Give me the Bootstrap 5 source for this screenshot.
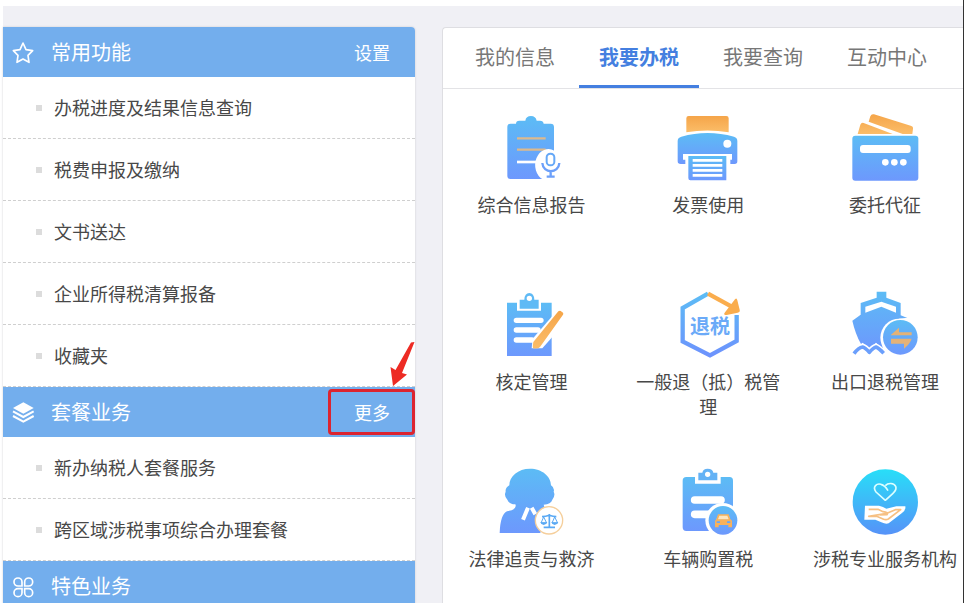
<!DOCTYPE html>
<html lang="zh-CN">
<head>
<meta charset="utf-8">
<meta name="viewport" content="width=device-width, initial-scale=1">
<title>我要办税</title>
<link href="https://cdn.jsdelivr.net/npm/bootstrap@5.3.0/dist/css/bootstrap.min.css" rel="stylesheet">
<style>
body{font-family:"Noto Sans CJK SC",sans-serif;font-size:18px;line-height:25px;color:#484848;background:#fff}
.page-frame{padding:6px 0 0 3px;border-right:1px solid #333}
.page-grid{display:grid;grid-template-columns:minmax(0,412fr) minmax(0,521fr);gap:27px;background:#f0f0f5;padding-top:21px}
.side-panel{background:#fff;border-radius:0 4px 0 0;box-shadow:0 0 2px #c4c4ca}
.side-head{background:#73aeed;color:#fff;height:50px;padding:0 25px 0 8px;gap:16px}
.side-head h2{font-size:20px;line-height:28px;font-weight:400}
.side-head svg{width:24px;height:24px}
.side-head button{color:#fff;font-size:18px;line-height:25px}
.side-panel section:first-child .side-head{border-radius:0 4px 0 0}
.side-item{height:62px;padding-left:33px;gap:12px;border-bottom:1px dashed #cfcfcf;color:#484848}
.side-item::before{content:"";width:6px;height:6px;background:#dcdcdc}
.callout-box{right:0;top:2px;width:87px;height:46px;border:3px solid #dc2430;border-radius:4px;pointer-events:none}
.callout-arrow{right:0;bottom:49px;width:26px!important;height:48px!important;pointer-events:none}
.main-panel{background:#fff;border:1px solid #dedee2;border-right:0;border-radius:4px 0 0 0}
.tab-bar{height:61px;padding-left:12px;gap:4px;border-bottom:1px solid #e3e3e6}
.tab-link{width:120px;color:#777;font-size:20px;line-height:28px;border-bottom:3px solid transparent}
.tab-link.active{color:#447fe0;font-weight:700;border-color:#447fe0}
.service-grid{display:grid;grid-template-columns:repeat(3,34%);grid-auto-rows:177px;overflow:hidden}
.service{padding:23px 14px 0;gap:8px;color:#484848}
.service svg{width:72px;height:72px;flex:none}
</style>
<script src="https://cdn.jsdelivr.net/npm/bootstrap@5.3.0/dist/js/bootstrap.bundle.min.js"></script>
</head>
<body>
<svg width="0" height="0" class="position-absolute" aria-hidden="true">
<defs>
<linearGradient id="blue" x1="0" y1="0" x2="0" y2="1"><stop offset="0" stop-color="#5cbcf5"/><stop offset="1" stop-color="#6d98fd"/></linearGradient>
<linearGradient id="cyan" x1="0" y1="0" x2="0" y2="1"><stop offset="0" stop-color="#28def8"/><stop offset="1" stop-color="#5692f8"/></linearGradient>
<linearGradient id="gold" x1="0" y1="0" x2="0" y2="1"><stop offset="0" stop-color="#f5a549"/><stop offset="1" stop-color="#fbbd69"/></linearGradient>
</defs>
</svg>
<div class="page-frame vh-100 overflow-hidden">
<div class="page-grid h-100">
<aside class="side-panel">
<section>
<div class="side-head d-flex align-items-center">
<svg viewBox="33 120 72 72" fill="none" stroke="#fff" stroke-width="5" stroke-linejoin="round" aria-hidden="true"><path d="M69 129L78 149L98 152L84 166L87 187L69 177L51 187L54 166L40 152L60 149Z"/></svg>
<h2 class="m-0 flex-grow-1">常用功能</h2>
<button type="button" class="btn p-0 border-0">设置</button>
</div>
<nav>
<a href="#" class="side-item d-flex align-items-center text-decoration-none">办税进度及结果信息查询</a>
<a href="#" class="side-item d-flex align-items-center text-decoration-none">税费申报及缴纳</a>
<a href="#" class="side-item d-flex align-items-center text-decoration-none">文书送达</a>
<a href="#" class="side-item d-flex align-items-center text-decoration-none">企业所得税清算报备</a>
<a href="#" class="side-item d-flex align-items-center text-decoration-none">收藏夹</a>
</nav>
</section>
<section>
<div class="side-head d-flex align-items-center position-relative">
<svg viewBox="33 60 72 72" fill="#fff" aria-hidden="true"><path d="M70 67L101 84L70 101L39 84Z"/><path d="M39 94L70 111L101 94M39 108L70 125L101 108" fill="none" stroke="#fff" stroke-width="6"/></svg>
<h2 class="m-0 flex-grow-1">套餐业务</h2>
<button type="button" class="btn p-0 border-0">更多</button>
<span class="callout-box position-absolute"></span>
<svg class="callout-arrow position-absolute" viewBox="390 340 26 48" fill="#ed2b24" aria-hidden="true"><path d="M394 386L391.500 367L396.500 370L412 342.500L415.500 342L403 373L408 374.500Z"/></svg>
</div>
<nav>
<a href="#" class="side-item d-flex align-items-center text-decoration-none">新办纳税人套餐服务</a>
<a href="#" class="side-item d-flex align-items-center text-decoration-none">跨区域涉税事项综合办理套餐</a>
</nav>
</section>
<section>
<div class="side-head d-flex align-items-center">
<svg viewBox="33 582 72 72" fill="none" stroke="#fff" stroke-width="5" aria-hidden="true"><path d="M66 618H54A12 12 0 1 1 66 606ZM74 618V606A12 12 0 1 1 86 618ZM66 626V638A12 12 0 1 1 54 626ZM74 626H86A12 12 0 1 1 74 638Z"/></svg>
<h2 class="m-0 flex-grow-1">特色业务</h2>
</div>
</section>
</aside>
<main class="main-panel">
<nav class="tab-bar d-flex">
<a href="#" class="tab-link d-flex align-items-center justify-content-center text-decoration-none">我的信息</a>
<a href="#" class="tab-link active d-flex align-items-center justify-content-center text-decoration-none" aria-current="page">我要办税</a>
<a href="#" class="tab-link d-flex align-items-center justify-content-center text-decoration-none">我要查询</a>
<a href="#" class="tab-link d-flex align-items-center justify-content-center text-decoration-none">互动中心</a>
</nav>
<div class="service-grid">
<a href="#" class="service d-flex flex-column align-items-center text-center text-decoration-none">
<svg viewBox="45 36 216 216" aria-hidden="true"><path fill="url(#blue)" d="M92 71H108Q108 62 118 62H136Q138 48 153 48Q167 48 170 62H180Q190 62 191 71H212Q222 71 222 81V237H92Q82 237 82 227V81Q82 71 92 71Z"/><path d="M111 115H197M111 149H197" stroke="#dcb98e" stroke-width="7"/><path d="M111 186H178" stroke="#fff" stroke-width="8"/><path fill="#fff" d="M223 152A36 43 0 0 0 188 238H223Z"/><rect x="200" y="161" width="23" height="35" rx="11" fill="#fff" stroke="#65a8f7" stroke-width="6"/><path d="M187 189C189 222 236 222 238 189M212 213V229M200 230H224" fill="none" stroke="#6ca0fa" stroke-width="7"/></svg>
<span>综合信息报告</span></a>
<a href="#" class="service d-flex flex-column align-items-center text-center text-decoration-none">
<svg viewBox="66 36 216 216" aria-hidden="true"><path fill="url(#gold)" d="M116 48H229Q236 48 236 55V97Q172 86 109 97V55Q109 48 116 48Z"/><path fill="url(#blue)" d="M94 110Q172 88 252 110Q262 113 262 123V184Q262 192 254 192H241V179H246V162H99V179H106V192H92Q83 192 83 184V123Q83 113 94 110Z"/><circle cx="232" cy="131" r="12" fill="#fff"/><path fill="url(#blue)" d="M115 168H229V241H121Q115 241 115 234Z"/><path d="M128 181H217M128 196H217M128 211H217M128 226H217" stroke="#fff" stroke-width="8"/></svg>
<span>发票使用</span></a>
<a href="#" class="service d-flex flex-column align-items-center text-center text-decoration-none">
<svg viewBox="57 36 216 216" aria-hidden="true"><path fill="url(#gold)" d="M83 102L91 74Q94 67 101 69L188 102ZM116 65L121 49Q124 41 132 43L242 77Q250 79 249 86L247 102H218Z"/><rect x="67" y="107" width="198" height="135" rx="9" fill="url(#blue)"/><rect x="90" y="135" width="152" height="24" rx="9" fill="#fff"/><circle cx="166" cy="187" r="10" fill="#fff"/><circle cx="193" cy="187" r="10" fill="#fff"/><circle cx="220" cy="187" r="10" fill="#fff"/></svg>
<span>委托代征</span></a>
<a href="#" class="service d-flex flex-column align-items-center text-center text-decoration-none">
<svg viewBox="45 27 216 216" aria-hidden="true"><path fill="url(#blue)" d="M81 68H111V92H183V68H215V228H81Z"/><path fill="#5fbaf5" fill-rule="evenodd" d="M119 59H133Q134 39 148 39Q162 39 163 59H176V86H119ZM148 47A8 8 0 1 0 148 63A8 8 0 1 0 148 47"/><path d="M109 121H183M109 150H174M109 180H156" stroke="#fff" stroke-width="16" stroke-linecap="round"/><path d="M155 205L158 176L217 108V171L187 205Z" fill="#fff"/><path fill="url(#gold)" d="M235 94Q240 90 245 95Q253 99 248 106L180 201Q175 207 160 205Q157 204 160 186Z"/></svg>
<span>核定管理</span></a>
<a href="#" class="service d-flex flex-column align-items-center text-center text-decoration-none">
<svg viewBox="96 27 216 216" aria-hidden="true"><defs><linearGradient id="hexline" gradientUnits="userSpaceOnUse" x1="0" y1="40" x2="0" y2="230"><stop stop-color="#5cbcf5"/><stop offset="1" stop-color="#6d92fd"/></linearGradient></defs><path d="M204 41L128 84V184L210 226L290 183V105" fill="none" stroke="url(#hexline)" stroke-width="13"/><path d="M204 41L275 80" stroke="#faad4d" stroke-width="13"/><path fill="#faad4d" d="M285 58Q290 52 292 61L299 89Q301 96 293 98L260 105Q249 105 254 98Z"/><text x="210" y="161" text-anchor="middle" font-size="60" font-weight="700" fill="#6baaf8">退税</text></svg>
<span>一般退（抵）税管理</span></a>
<a href="#" class="service d-flex flex-column align-items-center text-center text-decoration-none">
<svg viewBox="72 27 216 216" aria-hidden="true"><path fill="url(#blue)" fill-rule="evenodd" d="M155 35H184V53L227 69V106L247 114Q209 112 184 137Q162 166 174 207L153 188L133 208L113 188L108 192Q91 162 82 122L107 104V69L155 53ZM121 80V98L169 80L213 98V80L169 65Z"/><path d="M87 221Q100 203 113 201Q121 203 133 217Q145 203 153 201Q162 205 176 220" fill="none" stroke="#fff" stroke-width="20"/><path d="M87 221Q100 203 113 201Q121 203 133 217Q145 203 153 201Q162 205 176 220" fill="none" stroke="#6b9ffc" stroke-width="11" stroke-linejoin="round"/><circle cx="223" cy="173" r="57" fill="#fff"/><circle cx="226" cy="172" r="52" fill="url(#blue)"/><path fill="#e3b277" d="M198 164L222 143V157H260V166H198ZM198 176H260Q256 190 237 206V191H198Z"/></svg>
<span>出口退税管理</span></a>
<a href="#" class="service d-flex flex-column align-items-center text-center text-decoration-none">
<svg viewBox="105 18 216 216" aria-hidden="true"><path fill="url(#blue)" d="M210 26C174 26 148 49 148 76Q135 84 137 95Q131 107 142 119Q148 133 166 133Q171 143 155 151L141 154Q121 163 119 219H241L256 150L251 134Q273 132 277 119Q287 106 281 95Q285 84 273 76C273 49 246 26 210 26Z"/><path d="M189 179L204 143M215 143L226 163" stroke="#fff" stroke-width="12"/><circle cx="267" cy="181" r="41" fill="#fff" stroke="#f5cf9c" stroke-width="4"/><path d="M268 162V201M251 202H285M246 170Q257 170 268 166Q279 170 289 170" fill="none" stroke="#5aa9f4" stroke-width="5"/><path d="M251 171L243 189H260ZM284 171L276 189H293Z" fill="none" stroke="#5aa9f4" stroke-width="3"/><path fill="#5aa9f4" d="M241 187H262Q258 195 251 195Q244 195 241 187ZM274 187H295Q291 195 284 195Q277 195 274 187Z"/></svg>
<span>法律追责与救济</span></a>
<a href="#" class="service d-flex flex-column align-items-center text-center text-decoration-none">
<svg viewBox="66 18 216 216" aria-hidden="true"><path fill="url(#blue)" d="M109 51H135V71H212V51H239Q249 51 249 62V213H109Q98 213 98 202V62Q98 51 109 51Z"/><path fill="#64b2f5" fill-rule="evenodd" d="M145 38H157Q159 26 173 26Q188 26 190 38H202V61H145ZM173 35A8 8 0 1 0 173 51A8 8 0 1 0 173 35"/><path d="M134 120H213M134 163H178" stroke="#fff" stroke-width="23" stroke-linecap="round"/><circle cx="218" cy="181" r="52" fill="#fff"/><circle cx="219" cy="181" r="43" fill="url(#blue)"/><path fill="#ffe5bd" d="M205 165H235L241 179H199Z"/><path fill="#f8b15a" fill-rule="evenodd" d="M204 163H236L241 178L246 182V202H235V195H206V202H195V182L199 178ZM208 167L204 178H236L232 167ZM200 184V189H210V184ZM231 184V189H241V184Z"/></svg>
<span>车辆购置税</span></a>
<a href="#" class="service d-flex flex-column align-items-center text-center text-decoration-none">
<svg viewBox="597 18 216 216" aria-hidden="true"><circle cx="706" cy="126" r="98" fill="url(#cyan)"/><path d="M706 121L678 96C666 80 681 69 693 73C702 75 711 87 714 92M706 77C715 67 732 69 737 79C741 90 735 94 729 100L706 121" fill="none" stroke="#dcffff" stroke-width="5" stroke-linejoin="round"/><path fill="#fff" d="M645 137H687Q700 140 709 146L739 139H766Q768 151 755 160L716 190Q708 194 694 187L676 179H643Z"/><path d="M656 148H684L699 155Q717 157 711 164L690 165M711 160L736 149H752L715 177Q708 181 699 177L680 169H656Z" fill="none" stroke="#f6c083" stroke-width="5" stroke-linejoin="round"/></svg>
<span>涉税专业服务机构</span></a>
</div>
</main>
</div>
</div>
</body>
</html>
